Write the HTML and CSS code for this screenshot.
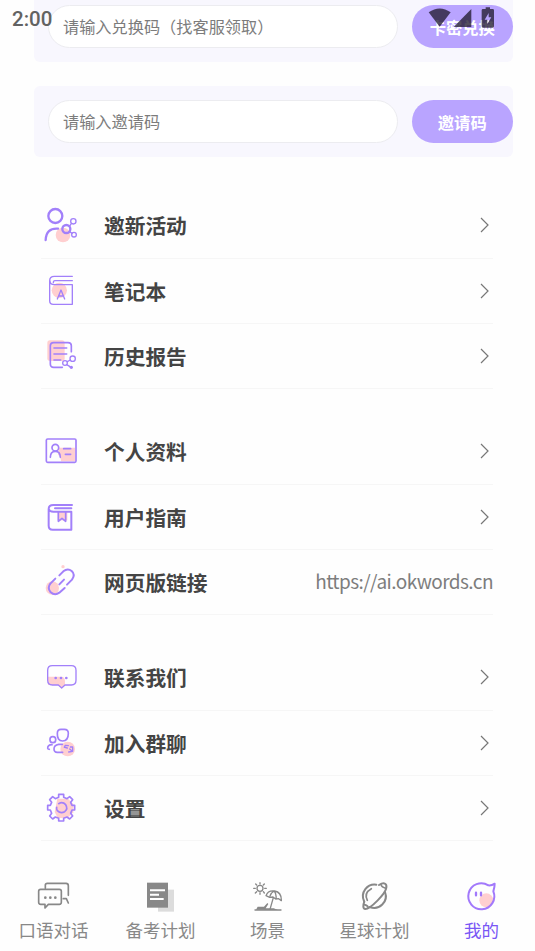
FILE: index.html
```html
<!DOCTYPE html>
<html lang="zh-CN">
<head>
<meta charset="utf-8">
<title>我的</title>
<link rel="stylesheet" href="styles.css">
</head>
<body>
<div class="status">
  <span class="time">2:00</span>
  <svg class="status-icons" viewBox="140 15 210 75">
    <path d="M145 37Q178 14 211 37L178 80Z"/><path d="M273 27V81H220Z"/>
    <path fill-rule="evenodd" d="M316 22h13v5h8q4 0 4 4v48q0 4-4 4h-29q-4 0-4-4V31q0-4 4-4h8ZM325 39l-12 20h8v13l12-20h-8Z"/>
  </svg>
</div>
<main class="page">
  <section class="codes">
    <form class="card"><input type="text" placeholder="请输入兑换码（找客服领取）"><button type="button">卡密兑换</button></form>
    <form class="card"><input type="text" placeholder="请输入邀请码"><button type="button">邀请码</button></form>
  </section>
  <section class="group">
    <div class="row">
      <svg class="icon" viewBox="33 32 120 120"><circle class="pink" cx="99" cy="122" r="22"/><g class="w7"><circle cx="76" cy="65" r="21"/><path d="M47 137C48 113 60 101 84 103"/><circle cx="109" cy="104" r="12"/></g><g class="w4"><circle cx="130" cy="81" r="8"/><circle cx="132" cy="121" r="7"/><path d="M118 96l6-8M119 112l7 5"/></g></svg>
      <span class="label">邀新活动</span><svg class="arrow" viewBox="0 0 10 16"><path d="M1 1l7 7-7 7"/></svg>
    </div>
    <div class="row">
      <svg class="icon" viewBox="33 228 120 120"><circle class="pink" cx="88" cy="286" r="23"/><g class="w4"><path d="M127 244H73q-14 0-14 13v60q0 11 11 11h57V269H73q-13 0-13-11M127 257H75q-5 0-5 6"/><path d="M82 312l11-27 11 27M86 303h14"/></g></svg>
      <span class="label">笔记本</span><svg class="arrow" viewBox="0 0 10 16"><path d="M1 1l7 7-7 7"/></svg>
    </div>
    <div class="row">
      <svg class="icon" viewBox="33 33 120 120"><rect class="pink" x="52" y="46" width="52" height="62" rx="8"/><g class="w5"><path d="M97 127H71q-10 0-10-10V62q0-9 10-9h43q10 0 10 9v18M72 69h38M72 87h38M72 105h20"/></g><g class="w4"><circle cx="128" cy="101" r="8"/><circle cx="105" cy="114" r="7"/><path d="M112 110l9-5M110 119l10 6"/><circle class="violet" cx="124" cy="127" r="5"/></g></svg>
      <span class="label">历史报告</span><svg class="arrow" viewBox="0 0 10 16"><path d="M1 1l7 7-7 7"/></svg>
    </div>
  </section>
  <section class="group">
    <div class="row">
      <svg class="icon" viewBox="33 319 120 120"><path class="pink" d="M86 369h49v41H93q0-14-9-20Z"/><g class="w5"><rect x="49" y="343" width="89" height="70" rx="4"/><circle cx="76" cy="369" r="10"/><path d="M61 398q0-18 15-18t15 18M101 372h21M106 389h16"/></g></svg>
      <span class="label">个人资料</span><svg class="arrow" viewBox="0 0 10 16"><path d="M1 1l7 7-7 7"/></svg>
    </div>
    <div class="row">
      <svg class="icon" viewBox="33 20 120 120"><path class="pink" d="M83 63h29v27H83z"/><g class="w6"><path d="M126 44H70q-14 0-14 12v50q0 12 12 12h56V64H70q-12 0-14-8M75 54h49"/><path class="thin" d="M85 66v27l11-9 11 9V66"/></g></svg>
      <span class="label">用户指南</span><svg class="arrow" viewBox="0 0 10 16"><path d="M1 1l7 7-7 7"/></svg>
    </div>
    <div class="row">
      <svg class="icon" viewBox="33 216 120 120"><circle class="pink" cx="67" cy="294" r="20"/><circle class="pink" cx="99" cy="230" r="5"/><g class="w6"><path d="M88 256l12-12q13-11 25-1 12 11 1 26l-15 15M76 266L61 281q-10 13 1 26 13 11 26 1l16-14M88 283l14-14"/></g></svg>
      <span class="label">网页版链接</span><span class="link">https://ai.okwords.cn</span>
    </div>
  </section>
  <section class="group">
    <div class="row">
      <svg class="icon" viewBox="33 22 120 120"><path class="pink" d="M54 81h42q9 2 9 15v9l-10 10-11-9H54Z"/><g class="w4"><path d="M67 48h57q14 0 14 14v30q0 14-14 14h-19l-10 9-10-9H67q-14 0-14-14V62q0-14 14-14Z"/></g><g class="violet"><circle cx="77" cy="85" r="4"/><circle cx="93" cy="85" r="4"/><circle cx="109" cy="85" r="4"/></g></svg>
      <span class="label">联系我们</span><svg class="arrow" viewBox="0 0 10 16"><path d="M1 1l7 7-7 7"/></svg>
    </div>
    <div class="row">
      <svg class="icon" viewBox="33 218 120 120"><circle class="pink" cx="113" cy="296" r="22"/><g class="w5"><path d="M93 237h10q12 0 12 12 0 23-17 23t-16-23q0-12 11-12Z"/><rect x="60" y="259" width="17" height="18" rx="8"/><path d="M66 283q-13 0-13 11 0 3 5 3M97 282H86q-14 2-14 14 0 10 10 10h16"/></g><g class="w4"><path d="M103 291l3-6 9 1M104 291l8 2M121 290h7v13l-12 2M127 303l-8-7"/></g></svg>
      <span class="label">加入群聊</span><svg class="arrow" viewBox="0 0 10 16"><path d="M1 1l7 7-7 7"/></svg>
    </div>
    <div class="row">
      <svg class="icon" viewBox="33 414 120 120"><path class="pink" d="M82 446h32l16 16v25l-17 17H83l-9-18Z"/><g class="w5"><path d="M86 433h15v9l10 4 8-6 9 9-6 8 4 9h8v14h-8l-4 10 6 8-9 9-8-6-10 4v8H86v-8l-10-4-8 6-9-9 6-8-4-10h-8v-14h8l4-9-6-8 9-9 8 6 10-4Z"/><path d="M86 461q12-7 21 3 8 12-3 21-12 7-22-3-3-4-2-10"/></g></svg>
      <span class="label">设置</span><svg class="arrow" viewBox="0 0 10 16"><path d="M1 1l7 7-7 7"/></svg>
    </div>
  </section>
</main>
<nav class="tabs">
  <a class="tab"><svg viewBox="102 25 120 108"><g class="stroke w5"><path d="M136 55V46q0-5 6-5h56q7 0 7 7v29M122 59h56q6 0 6 6v33q0 6-6 6h-33l-10 11v-11h-13q-6 0-6-6V65q0-6 6-6ZM190 87h9l6 13"/></g><g class="fill"><circle cx="136" cy="84" r="4"/><circle cx="151" cy="84" r="4"/><circle cx="166" cy="84" r="4"/></g></svg>口语对话</a>
  <a class="tab"><svg viewBox="423 25 120 108"><path class="light" d="M474 60h48v66h-48z"/><path class="fill" d="M441 39h63v75h-63z"/><path class="paper" d="M450 62h45M450 75h27M450 88h41"/></svg>备考计划</a>
  <a class="tab"><svg viewBox="53 25 120 108"><g class="stroke w4"><circle cx="89" cy="56" r="9"/><path d="M89 39v4M89 69v5M70 56h5M103 56h5M76 43l3 3M99 66l3 4M102 43l-3 3M79 66l-4 4M107 78q6-17 26-14 21 4 20 29l-8-6-9 1-8-6-10 1ZM119 79q4-11 13-15 7 10 5 23M129 84l-10 35M74 121h78"/></g><path class="fill" d="M77 120l5-9h19l10-11 3 3-8 13h24l13 5Z"/></svg>场景</a>
  <a class="tab"><svg viewBox="374 25 120 108"><g class="stroke w6"><path d="M438 45A35 35 0 0 0 401 94M464 67A35 35 0 0 1 418 112"/><path d="M446 46C461 37 470 41 468 54 466 72 420 118 405 118 397 117 398 106 402 96"/><path class="w5" d="M452 45q2 8 15 11M402 105q10 2 12 9M411 92q-11-22 12-35"/></g></svg>星球计划</a>
  <a class="tab active"><svg viewBox="695 25 120 108"><circle class="pink" cx="768" cy="92" r="21"/><path class="stroke w6" d="M774 47A39 39 0 1 0 789 65Q793 52 793 42 784 48 774 47Z"/><path class="stroke w7" d="M737 69v8M752 69v8"/></svg>我的</a>
</nav>
</body>
</html>
```
FILE: styles.css
```css
* { box-sizing: border-box; }
body {
  margin: 0;
  width: 535px;
  height: 951px;
  overflow: hidden;
  display: flex;
  flex-direction: column;
  background: #fefefe;
  color: #444;
  font-family: "Noto Sans CJK SC", sans-serif;
}
svg { display: block; flex: none; }
.status {
  position: absolute;
  inset: 0 0 auto;
  display: flex;
  justify-content: space-between;
  height: 38px;
  padding: 5px 38px 0 12px;
  z-index: 2;
}
.time { font: 500 20.5px/28px Roboto, sans-serif; color: #626262; }
.status-icons { width: 70px; height: 25px; fill: rgba(35, 28, 49, .78); }
.page { flex: 1; min-height: 0; }
.codes {
  display: flex;
  flex-direction: column;
  gap: 24px;
  margin: -9px 22px 35.9px 34px;
}
.card {
  display: flex;
  justify-content: space-between;
  align-items: center;
  height: 71.2px;
  margin: 0;
  padding-left: 14px;
  border-radius: 6px;
  background: #f8f7fe;
}
.card input {
  width: 350px;
  height: 43px;
  padding: 0 14px 1px;
  border: 1.5px solid #ececf0;
  border-radius: 22px;
  background: #fff;
  font: 16.2px "Noto Sans CJK SC", sans-serif;
  outline: 0;
}
.card input::placeholder { color: #7c7c7c; opacity: 1; }
.card button {
  width: 101.5px;
  height: 43px;
  padding: 0;
  border: 0;
  border-radius: 22px;
  background: #b9a4ff;
  color: #fff;
  font: 700 16.3px "Noto Sans CJK SC", sans-serif;
}
.group { margin: 0 42px 29.8px 41px; }
.row {
  display: flex;
  align-items: center;
  height: 65.4px;
  border-bottom: 1.4px solid #f6f6f6;
}
.icon { width: 40px; height: 40px; margin-right: 23px; }
.label { flex: 1; font-size: 20.7px; font-weight: 700; line-height: 30px; }
.arrow { width: 10px; height: 16px; margin-right: 3px; fill: none; stroke: #777; stroke-width: 1.2; }
.link { color: #7d7d7d; font-size: 19px; letter-spacing: -.56px; line-height: 28px; margin-top: -2px; }
.icon g { fill: none; stroke: #a280fa; stroke-linecap: round; stroke-linejoin: round; }
.icon .violet { fill: #a280fa; stroke: none; }
.pink { fill: #ffcfd0; }
.w4 { stroke-width: 4; }
.w5 { stroke-width: 5; }
.w6 { stroke-width: 6; }
.w7 { stroke-width: 7; }
.thin { stroke-width: 5; }
.tabs { display: flex; height: 76px; padding-top: 3px; }
.tab {
  flex: 1;
  display: flex;
  flex-direction: column;
  align-items: center;
  color: #888;
  font-size: 17.5px;
  line-height: 32px;
}
.tab svg { width: 40px; height: 36px; }
.stroke { fill: none; stroke: currentColor; stroke-linecap: round; stroke-linejoin: round; }
.fill { fill: currentColor; }
.light { fill: #dcdcdc; }
.paper { stroke: #fff; stroke-width: 6; }
.active { color: #7957f5; }
.active .stroke { stroke: #a279fb; }
```
